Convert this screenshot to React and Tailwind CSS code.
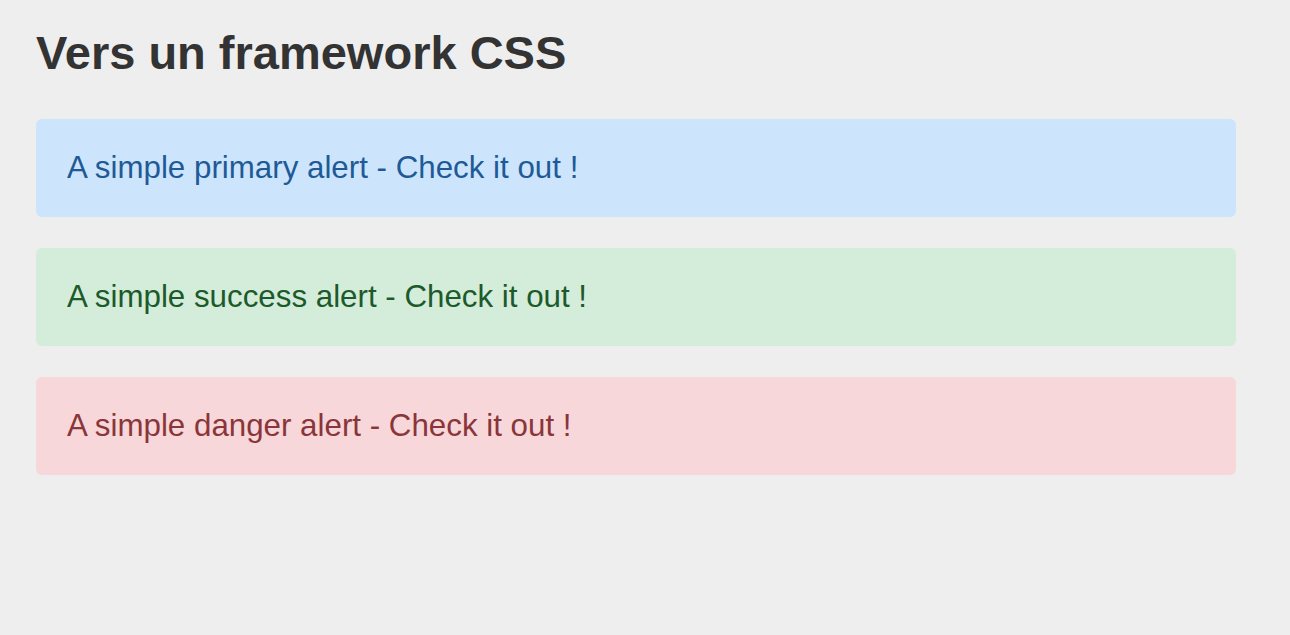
const ALERTS = [
  {
    label: "A simple primary alert - Check it out !",
    className: "bg-[#cce5fc] text-[#1f5a96]",
  },
  {
    label: "A simple success alert - Check it out !",
    className: "bg-[#d4ecda] text-[#1c5a2a]",
  },
  {
    label: "A simple danger alert - Check it out !",
    className: "bg-[#f7d7da] text-[#8a3539]",
  },
];

const App = () => {
  return (
    <main className="min-h-screen bg-[#eeeeee] font-['Liberation_Sans',Arial,sans-serif]">
      <div className="w-[1200px] ml-[36px] pt-[24px]">
        <h1 className="text-[47px] leading-[58px] font-bold text-[#333333]">
          Vers un framework CSS
        </h1>
        <div className="flex flex-col gap-[31px] mt-[37px]">
          {ALERTS.map((alert) => (
            <div
              key={alert.label}
              className={`flex items-center h-[98px] px-[31px] rounded-[6px] text-[31.3px] ${alert.className}`}
            >
              {alert.label}
            </div>
          ))}
        </div>
      </div>
    </main>
  );
};

export default App;
